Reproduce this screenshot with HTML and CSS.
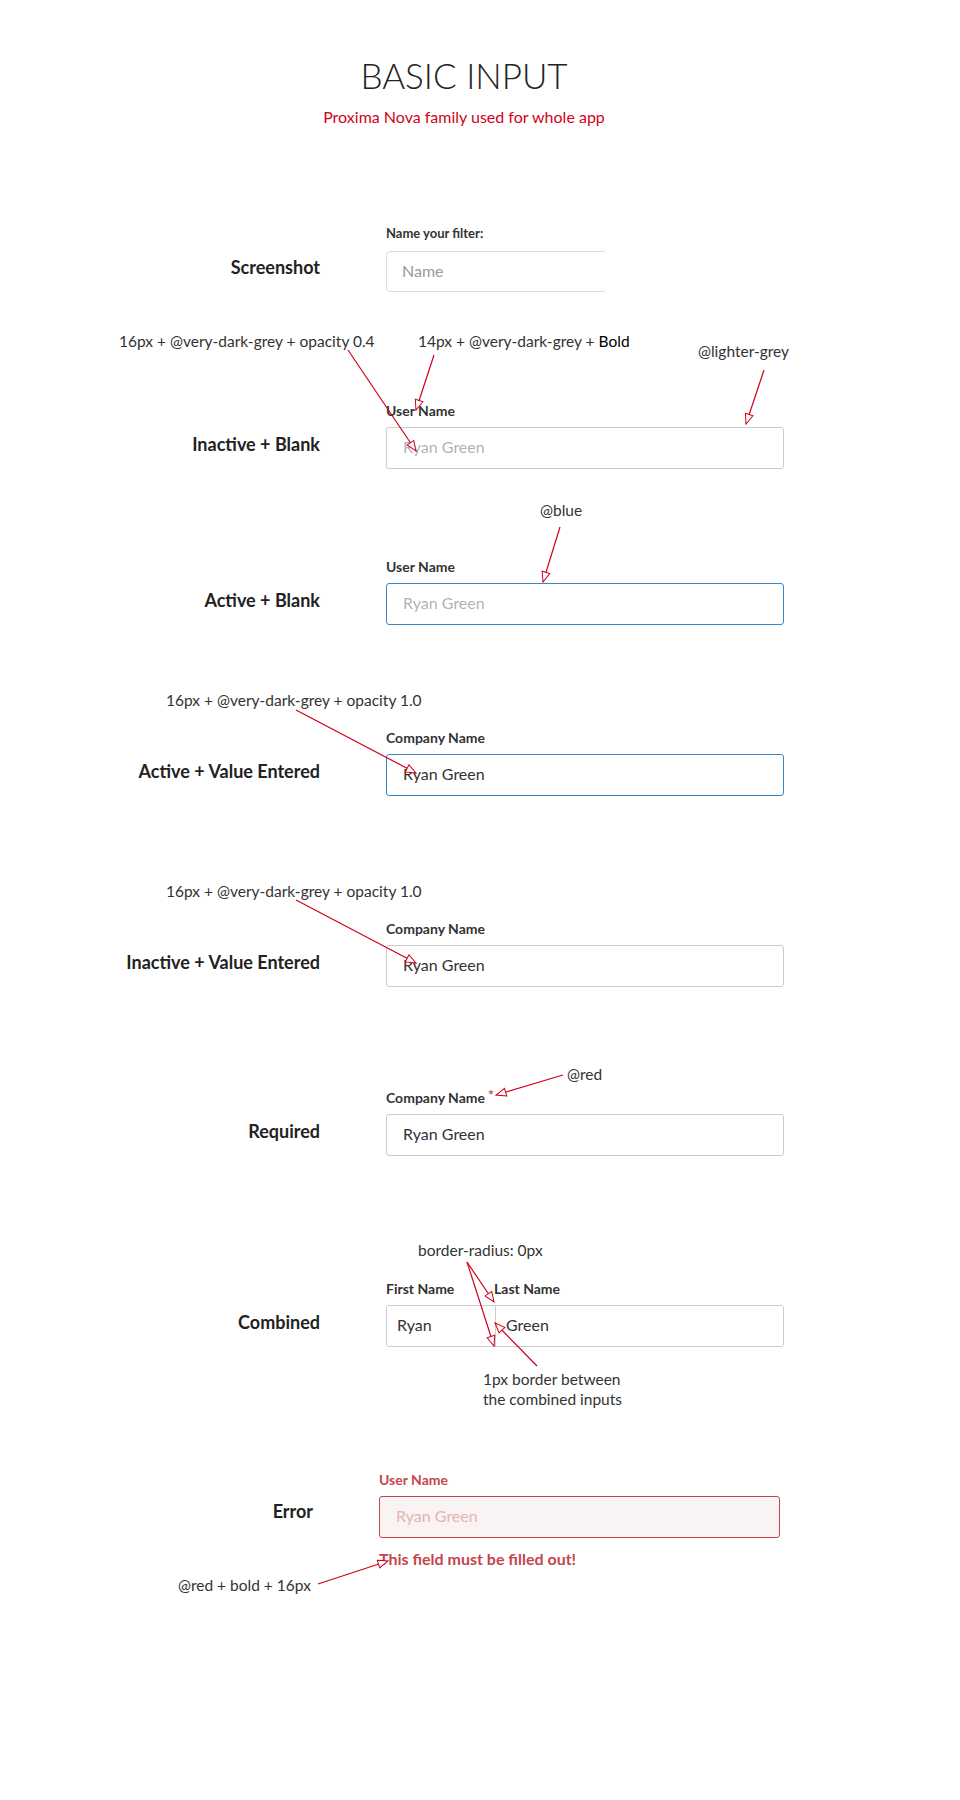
FILE: index.html
```html
<!DOCTYPE html>
<html lang="en">
<head>
<meta charset="utf-8">
<title>Basic Input</title>
<link rel="stylesheet" href="styles.css">
</head>
<body>
<main class="page">
  <header class="head">
    <h1 class="title">BASIC INPUT</h1>
    <p class="subtitle">Proxima Nova family used for whole app</p>
  </header>

  <section class="row row-shot">
    <div class="side">Screenshot</div>
    <div class="field">
      <label class="shot-label">Name your filter:</label>
      <div class="shot-clip"><input class="shot-input" type="text" placeholder="Name"></div>
    </div>
  </section>

  <section class="row row-2">
    <div class="side">Inactive + Blank</div>
    <div class="field">
      <label class="lbl">User Name</label>
      <input class="inp" type="text" placeholder="Ryan Green">
    </div>
  </section>

  <section class="row row-3">
    <div class="side">Active + Blank</div>
    <div class="field">
      <label class="lbl">User Name</label>
      <input class="inp is-active" type="text" placeholder="Ryan Green">
    </div>
  </section>

  <section class="row row-4">
    <div class="side">Active + Value Entered</div>
    <div class="field">
      <label class="lbl">Company Name</label>
      <input class="inp is-active" type="text" value="Ryan Green">
    </div>
  </section>

  <section class="row row-5">
    <div class="side">Inactive + Value Entered</div>
    <div class="field">
      <label class="lbl">Company Name</label>
      <input class="inp" type="text" value="Ryan Green">
    </div>
  </section>

  <section class="row row-6">
    <div class="side">Required</div>
    <div class="field">
      <label class="lbl">Company Name<span class="req">*</span></label>
      <input class="inp" type="text" value="Ryan Green">
    </div>
  </section>

  <section class="row row-7">
    <div class="side">Combined</div>
    <div class="field">
      <div class="combo-labels">
        <label class="lbl">First Name</label>
        <label class="lbl">Last Name</label>
      </div>
      <div class="combo">
        <input class="combo-inp" type="text" value="Ryan">
        <input class="combo-inp combo-last" type="text" value="Green">
      </div>
    </div>
  </section>

  <section class="row row-err">
    <div class="side">Error</div>
    <div class="field field-err">
      <label class="lbl lbl-err">User Name</label>
      <input class="inp inp-err" type="text" placeholder="Ryan Green">
      <p class="err-msg">This field must be filled out!</p>
    </div>
  </section>

  <div class="notes">
    <p class="note n-op4">16px + @very-dark-grey + opacity 0.4</p>
    <p class="note n-bold">14px + @very-dark-grey + <span class="note-strong">Bold</span></p>
    <p class="note n-lgrey">@lighter-grey</p>
    <p class="note n-blue">@blue</p>
    <p class="note n-op1a">16px + @very-dark-grey + opacity 1.0</p>
    <p class="note n-op1b">16px + @very-dark-grey + opacity 1.0</p>
    <p class="note n-red">@red</p>
    <p class="note n-radius">border-radius: 0px</p>
    <p class="note n-border">1px border between<br>the combined inputs</p>
    <p class="note n-errnote">@red + bold + 16px</p>
  </div>

  <svg class="arrows" width="960" height="1800" viewBox="0 0 960 1800" aria-hidden="true">
    <defs>
      <marker id="ah" viewBox="0 0 12 10" refX="11" refY="5" markerWidth="12" markerHeight="10" markerUnits="userSpaceOnUse" orient="auto">
        <path d="M1,1 L11,5 L1,9 Z" fill="#fff" stroke="#d0021b" stroke-width="1"/>
      </marker>
    </defs>
    <g stroke="#d0021b" stroke-width="1.2" fill="none" marker-end="url(#ah)">
      <line x1="348" y1="350" x2="416" y2="451"/>
      <line x1="434" y1="355" x2="416" y2="410"/>
      <line x1="764" y1="370" x2="746" y2="424"/>
      <line x1="560" y1="527" x2="543" y2="582"/>
      <line x1="296" y1="710" x2="416" y2="773"/>
      <line x1="296" y1="900" x2="416" y2="963"/>
      <line x1="563" y1="1075" x2="496" y2="1095"/>
      <line x1="467" y1="1262" x2="494" y2="1302"/>
      <line x1="467" y1="1262" x2="494" y2="1346"/>
      <line x1="537" y1="1366" x2="495" y2="1323"/>
      <line x1="318" y1="1584" x2="388" y2="1561"/>
    </g>
  </svg>
</main>
</body>
</html>
```

FILE: styles.css
```css
* { box-sizing: border-box; }

html, body {
  margin: 0;
  padding: 0;
  background: #fff;
}

body {
  font-family: "Lato", "Open Sans", "Liberation Sans", sans-serif;
  color: #333;
}

.page {
  position: relative;
  width: 960px;
  min-height: 1800px;
  padding-top: 53px;
}

.head {
  display: flex;
  flex-direction: column;
  align-items: center;
  padding-right: 32px;
}

.title {
  margin: 0;
  font-size: 35px;
  line-height: 44px;
  font-weight: 300;
  color: #222;
}

.subtitle {
  margin: 10px 0 0;
  font-size: 16px;
  line-height: 20px;
  color: #d0021b;
}

/* rows */
.row {
  display: grid;
  grid-template-columns: 320px 398px;
  column-gap: 66px;
  align-items: end;
}

.side {
  text-align: right;
  font-size: 18px;
  line-height: 22px;
  font-weight: 700;
  color: #222;
  padding-bottom: 14px;
}

.field {
  display: flex;
  flex-direction: column;
}

.row-shot { margin-top: 97px; }
.row-2 { margin-top: 110px; }
.row-3 { margin-top: 89px; }
.row-4 { margin-top: 104px; }
.row-5 { margin-top: 124px; }
.row-6 { margin-top: 102px; }
.row-7 { margin-top: 124px; }
.row-err {
  margin-top: 124px;
  grid-template-columns: 313px 401px;
}
.row-err .side { padding-bottom: 47px; }

/* screenshot field */
.shot-label {
  font-size: 13px;
  line-height: 18px;
  font-weight: 700;
  color: #333;
  margin-bottom: 9px;
}

.shot-clip {
  width: 219px;
  overflow: hidden;
}

.shot-input {
  display: block;
  width: 260px;
  height: 41px;
  border: 1px solid #dcdcdc;
  border-radius: 4px;
  padding: 0 15px 3px;
  font-family: inherit;
  font-size: 16px;
  color: #333;
  background: #fff;
  outline: none;
}
.shot-input::placeholder { color: #999; }

/* labels */
.lbl {
  font-size: 14px;
  line-height: 18px;
  font-weight: 700;
  color: #333;
  margin-bottom: 7px;
}

.req {
  color: #c9505a;
  font-size: 14px;
  font-weight: 700;
  vertical-align: 3px;
  margin-left: 3px;
  line-height: 0;
}

/* inputs */
.inp {
  display: block;
  width: 100%;
  height: 42px;
  border: 1px solid #cccccc;
  border-radius: 3px;
  padding: 0 16px 3px;
  font-family: inherit;
  font-size: 16px;
  color: #333;
  background: #fff;
  outline: none;
}
.inp::placeholder { color: rgba(51, 51, 51, 0.4); }

.inp.is-active { border-color: #3a87c9; }

/* combined */
.combo-labels {
  display: grid;
  grid-template-columns: 108px 1fr;
}

.combo {
  display: grid;
  grid-template-columns: 108px 1fr;
  height: 42px;
  border: 1px solid #cccccc;
  border-radius: 3px;
  overflow: hidden;
}

.combo-inp {
  display: block;
  width: 100%;
  height: 100%;
  border: 0;
  padding: 0 10px 3px;
  font-family: inherit;
  font-size: 16px;
  color: #333;
  background: #fff;
  outline: none;
  min-width: 0;
}

.combo-last {
  border-left: 1px solid #cccccc;
}

/* error */
.lbl-err { color: #c4464c; }

.inp-err {
  border-color: #c4464c;
  background: #faf3f3;
}
.inp-err::placeholder { color: #e4b3b3; }

.err-msg {
  margin: 11px 0 0;
  font-size: 16px;
  line-height: 20px;
  font-weight: 700;
  color: #c4464c;
}

/* annotation layer */
.notes {
  position: absolute;
  inset: 0;
  pointer-events: none;
}

.note {
  position: absolute;
  margin: 0;
  font-size: 15.5px;
  line-height: 20px;
  color: #333;
  white-space: nowrap;
}

.note-strong { color: #000; }

.n-op4 { left: 119px; top: 331px; }
.n-bold { left: 418px; top: 331px; }
.n-lgrey { left: 698px; top: 341px; }
.n-blue { left: 540px; top: 500px; }
.n-op1a { left: 166px; top: 690px; }
.n-op1b { left: 166px; top: 881px; }
.n-red { left: 567px; top: 1064px; }
.n-radius { left: 418px; top: 1240px; }
.n-border { left: 483px; top: 1369px; white-space: normal; }
.n-errnote { left: 178px; top: 1575px; }

.arrows {
  position: absolute;
  left: 0;
  top: 0;
  pointer-events: none;
}
```
